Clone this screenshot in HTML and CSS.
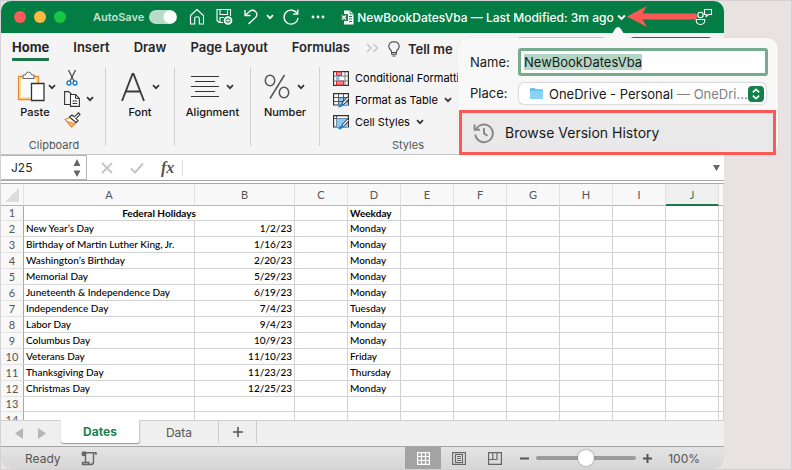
FILE: index.html
```html
<!DOCTYPE html>
<html lang="en">
<head>
    <meta charset="UTF-8">
    <meta name="viewport" content="width=device-width, initial-scale=1.0">
    <title>NewBookDatesVba</title>
    <link rel="stylesheet" href="styles.css">
</head>
<body>
    <svg class="defs" aria-hidden="true">
        <symbol id="chevron" viewBox="0 0 8 6">
            <path d="M1 1.2 L4 4.2 L7 1.2" fill="none" stroke="currentColor" stroke-width="1.7"/>
        </symbol>
    </svg>
    <div class="window">
        <div class="titlebar">
            <div class="lights">
                <span class="light red"></span>
                <span class="light yellow"></span>
                <span class="light green"></span>
            </div>
            <label class="autosave">AutoSave <input type="checkbox" class="switch" checked></label>
            <div class="quick">
                <button aria-label="Home page"><svg width="16" height="18" viewBox="0 0 16 18"><path d="M1.5 7.5 L8 1.5 L14.5 7.5 V16 H10.3 V10.5 Q10.3 8.8 8 8.8 Q5.7 8.8 5.7 10.5 V16 H1.5 Z"/></svg></button>
                <button aria-label="Save"><svg width="17" height="18" viewBox="0 0 17 18"><path d="M7 14.5 H3 L1 12.5 V1.5 H14.5 V8 M4 1.5 V6.5 H11.5 V1.5 M4 14.5 V9.5 H8"/><circle cx="12" cy="12.5" r="3.8" fill="#d5eadf"/><path d="M9.7 12.2 Q12 9.5 14.2 12 M14.3 13 Q12 15.5 9.8 13" stroke="#047d45"/></svg></button>
                <button aria-label="Undo"><svg width="14" height="18" viewBox="0 0 14 18"><path d="M1 2 V7.5 H6.5 M1.3 7.2 L5.5 3.5 Q8.5 1 11.5 3.5 Q14.3 6.5 11.5 9.5 L4.5 16" stroke-width="1.3"/></svg></button>
                <svg class="mini" width="8" height="6"><use href="#chevron"/></svg>
                <button aria-label="Redo"><svg width="18" height="18" viewBox="0 0 18 18"><path d="M15.8 1.5 V6.2 H11 M15.3 6 A7 7 0 1 0 16 10" stroke-width="1.3"/></svg></button>
                <button aria-label="More"><svg width="14" height="4" viewBox="0 0 14 4"><g fill="#fff" stroke="none"><circle cx="2" cy="2" r="1.4"/><circle cx="7" cy="2" r="1.4"/><circle cx="12" cy="2" r="1.4"/></g></svg></button>
            </div>
            <button class="doc-title">
                <svg width="14" height="15" viewBox="0 0 14 15"><path d="M4 .5 H10 L13.5 4 V14.5 H4 Z" fill="#fff"/><path d="M10 .5 V4 H13.5" fill="none" stroke="#047d45" stroke-width=".8"/><path d="M9 6.5 H12 M9 9 H12 M9 11.5 H12" stroke="#047d45"/><rect y="4" width="8" height="7" fill="#1d7c49"/><path d="M2 5.5 L6 9.5 M6 5.5 L2 9.5" stroke="#fff" stroke-width="1.2"/></svg>
                <span>NewBookDatesVba — Last Modified: 3m ago</span>
                <svg width="9" height="7"><use href="#chevron"/></svg>
            </button>
            <button class="people" aria-label="Presence"><svg width="18" height="18" viewBox="0 0 18 18"><circle cx="5.5" cy="7" r="2.7"/><path d="M1.2 11.5 H9.8 Q10 16.5 5.5 16.5 Q1 16.5 1.2 11.5 Z M9.5 1.5 H16.5 V6.5 H13.5 L11.2 8.5 V6.5 H9.5 Z"/></svg></button>
        </div>

        <nav class="tabs">
            <a href="#" class="active">Home</a>
            <a href="#">Insert</a>
            <a href="#">Draw</a>
            <a href="#">Page Layout</a>
            <a href="#">Formulas</a>
            <svg class="more" width="13" height="10" viewBox="0 0 13 10"><path d="M1 1 L5 5 L1 9 M7.5 1 L11.5 5 L7.5 9" fill="none" stroke="#c4c4c4" stroke-width="1.4"/></svg>
            <a href="#" class="tell">
                <svg width="12" height="16" viewBox="0 0 12 16"><path d="M3.7 11.5 Q3.7 10 2.2 8.5 Q.8 7 .8 5.3 Q1 .8 6 .7 Q11 .8 11.2 5.3 Q11.2 7 9.8 8.5 Q8.3 10 8.3 11.5 Z M3.7 11.5 V13.3 H8.3 V11.5 M4.5 15 H7.5" fill="none" stroke="#444" stroke-width="1.1"/></svg>
                Tell me
            </a>
            <span class="pill comments"></span>
            <span class="pill share"></span>
        </nav>

        <div class="ribbon">
            <div class="group clipboard">
                <div class="clip-tools">
                    <button class="big paste">
                        <span class="big-icon">
                            <svg width="28" height="31" viewBox="0 0 28 31"><path d="M1.5 5.5 H21.5 V28.5 H1.5 Z" fill="#fbe3a2" stroke="#ed8733" stroke-width="1.3"/><path d="M4 8 H19 V26 H4 Z" fill="#fafafa"/><path d="M6 7.5 V4 H8.5 Q9 1 11.5 1 Q14 1 14.5 4 H17 V7.5 Z" fill="#fff" stroke="#666"/><path d="M14.5 12.5 H27 V29.5 H14.5 Z" fill="#fff" stroke="#333" stroke-width="1.3"/></svg>
                            <svg class="mini" width="8" height="6"><use href="#chevron"/></svg>
                        </span>
                        Paste
                    </button>
                    <div class="clip-small">
                        <button aria-label="Cut"><svg width="16" height="16" viewBox="0 0 16 16"><path d="M4.5 0 L10 11 M11.5 0 L6 11" stroke="#444" stroke-width="1.2"/><circle cx="5" cy="13" r="2" fill="#fff" stroke="#1b82cb" stroke-width="1.4"/><circle cx="11" cy="13" r="2" fill="#fff" stroke="#1b82cb" stroke-width="1.4"/></svg></button>
                        <button aria-label="Copy"><svg width="16" height="16" viewBox="0 0 16 16"><path d="M6 13.5 H.6 V.6 H4.5 L7.5 3" fill="none" stroke="#333" stroke-width="1.1"/><path d="M6.5 3.5 H11.5 L15.4 7.4 V15.4 H6.5 Z" fill="#fff" stroke="#333" stroke-width="1.1"/><path d="M11.5 3.5 V7.4 H15.4 M8.5 10 H13.3 M8.5 12.5 H13.3" fill="none" stroke="#333"/></svg><svg class="mini" width="8" height="6"><use href="#chevron"/></svg></button>
                        <button aria-label="Format Painter"><svg width="17" height="16" viewBox="0 0 17 16"><path d="M1 7.5 L6 5.5 L12.5 10.5 L7.5 15 Z" fill="#fff" stroke="#ed8733" stroke-width="1.2"/><path d="M3 9.5 L11 11.5 L7.5 15 Z" fill="#f6b36a" stroke="#ed8733"/><path d="M5.5 5 L8 3 L10.3 4.8 L14.5 .8 L16 2.3 L12 6.5 L14 9 L12 10.5 Z" fill="#fff" stroke="#333" stroke-width="1.1"/></svg></button>
                    </div>
                </div>
                <span class="group-name">Clipboard</span>
            </div>
            <div class="group font">
                <button class="big">
                    <span class="big-icon">
                        <svg width="24" height="30" viewBox="0 0 24 30"><path d="M1 29 L11.5 2 H12.5 L23 29 M5 19.5 H19" fill="none" stroke="#3b3b3b" stroke-width="1.9"/></svg>
                        <svg class="mini" width="8" height="6"><use href="#chevron"/></svg>
                    </span>
                    Font
                </button>
            </div>
            <div class="group align">
                <button class="big">
                    <span class="big-icon">
                        <svg width="28" height="30" viewBox="0 0 28 30"><path d="M0 4.5 H28 M4 9.5 H24 M0 14.5 H28 M4 19.5 H24 M0 24.5 H28" stroke="#333" stroke-width="1.2"/></svg>
                        <svg class="mini" width="8" height="6"><use href="#chevron"/></svg>
                    </span>
                    Alignment
                </button>
            </div>
            <div class="group number">
                <button class="big">
                    <span class="big-icon">
                        <svg width="26" height="30" viewBox="0 0 26 30"><g fill="none" stroke="#555" stroke-width="1.5"><ellipse cx="6" cy="8.5" rx="4.7" ry="5.3"/><ellipse cx="20" cy="20.5" rx="4.7" ry="5.3"/><path d="M20.5 3 L6 26.5"/></g></svg>
                        <svg class="mini" width="8" height="6"><use href="#chevron"/></svg>
                    </span>
                    Number
                </button>
            </div>
            <div class="group styles">
                <div class="style-list">
                    <button>
                        <svg width="16" height="15" viewBox="0 0 16 15"><path d="M.6 .6 H15.4 V14.4 H.6 Z" fill="#fff" stroke="#333" stroke-width="1.2"/><path d="M1 5 H15 M1 10 H15 M4 1 V14 M12 1 V14" stroke="#777"/><path d="M3.5 1 H8.5 V4.5 H3.5 Z M3.5 10 H10.5 V14 H3.5 Z" fill="#f5868a" stroke="#d92d33"/><path d="M3.5 5 H6.5 V9.5 H3.5 Z" fill="#7abff0"/></svg>
                        Conditional Formatting
                    </button>
                    <button>
                        <svg width="16" height="15" viewBox="0 0 16 15"><path d="M.6 .6 H15.4 V12 H.6 Z" fill="#fff" stroke="#333" stroke-width="1.2"/><path d="M5.5 4.5 H15 V12 H5.5 Z" fill="#8cc8f4"/><path d="M1 4.5 H15 M1 8.5 H15 M5.5 1 V12 M10.5 1 V12" stroke="#555"/><path d="M15.5 4.5 L9.5 11" stroke="#333" stroke-width="3.2"/><path d="M15 5 L10 10.5" stroke="#fff" stroke-width="1.3"/><path d="M5 14.6 Q6.5 10.5 9.5 10.5 Q11.5 14 5 14.6" fill="#1b82cb"/></svg>
                        Format as Table
                        <svg class="mini" width="8" height="6"><use href="#chevron"/></svg>
                    </button>
                    <button>
                        <svg width="16" height="15" viewBox="0 0 16 15"><path d="M.6 .6 H15.4 V12 H.6 Z" fill="#fff" stroke="#333" stroke-width="1.2"/><path d="M1 3.5 H15 M3.5 1 V12" stroke="#555"/><path d="M3.5 3.5 H15 V12 H3.5 Z" fill="#8cc8f4"/><path d="M15.5 4.5 L9.5 11" stroke="#333" stroke-width="3.2"/><path d="M15 5 L10 10.5" stroke="#fff" stroke-width="1.3"/><path d="M5 14.6 Q6.5 10.5 9.5 10.5 Q11.5 14 5 14.6" fill="#1b82cb"/></svg>
                        Cell Styles
                        <svg class="mini" width="8" height="6"><use href="#chevron"/></svg>
                    </button>
                </div>
                <span class="group-name">Styles</span>
            </div>
        </div>

        <div class="formula-bar">
            <div class="name-box">
                <input type="text" value="J25" aria-label="Name Box">
                <svg width="8" height="20" viewBox="0 0 8 20"><path d="M4 1 L7.5 8 H.5 Z M4 19 L.5 12.5 H7.5 Z" fill="#666"/></svg>
            </div>
            <button aria-label="Cancel"><svg width="12" height="12" viewBox="0 0 12 12"><path d="M1 1 L11 11 M11 1 L1 11" stroke="#c6c6c6" stroke-width="2"/></svg></button>
            <button aria-label="Enter"><svg width="14" height="12" viewBox="0 0 14 12"><path d="M1 6.5 L5 10.5 L13 1.5" fill="none" stroke="#c6c6c6" stroke-width="2"/></svg></button>
            <button class="fx">fx</button>
            <input type="text" class="formula" aria-label="Formula">
            <svg class="expand" width="7" height="6" viewBox="0 0 7 6"><path d="M0 0 H7 L3.5 6 Z" fill="#666"/></svg>
        </div>

        <div class="sheet">
            <table>
                <colgroup>
                    <col class="c-row"><col class="c-a"><col class="c-b">
                    <col class="c-std" span="8"><col>
                </colgroup>
                <thead>
                    <tr>
                        <th class="corner"><svg width="14" height="14" viewBox="0 0 14 14"><path d="M14 0 V14 H0 Z" fill="#dcdcdc"/></svg></th>
                        <th>A</th><th>B</th><th>C</th><th>D</th><th>E</th><th>F</th><th>G</th><th>H</th><th>I</th><th class="current">J</th><th></th>
                    </tr>
                </thead>
                <tbody id="rows"></tbody>
            </table>
        </div>

        <div class="sheet-tabs">
            <div class="arrows">
                <svg width="8" height="11" viewBox="0 0 8 11"><path d="M8 0 V11 L0 5.5 Z" fill="#b5b5b5"/></svg>
                <svg width="8" height="11" viewBox="0 0 8 11"><path d="M0 0 V11 L8 5.5 Z" fill="#b5b5b5"/></svg>
            </div>
            <button class="sheet-tab active">Dates</button>
            <button class="sheet-tab">Data</button>
            <button class="add" aria-label="New sheet"><svg width="10" height="10" viewBox="0 0 10 10"><path d="M5 0 V10 M0 5 H10" stroke="#555" stroke-width="1.6"/></svg></button>
        </div>

        <div class="status">
            <span class="ready">Ready</span>
            <svg width="16" height="15" viewBox="0 0 16 15"><circle cx="3" cy="2.7" r="2.5" fill="#666"/><path d="M4 1.7 H15 V4 M12.5 2 V11 Q12.5 13.5 10 13.5 H1.5 V11.5 H8 V13 M4.5 4 V11.5" fill="none" stroke="#666" stroke-width="1.4"/></svg>
            <div class="views">
                <button class="on" aria-label="Normal"><svg width="13" height="13" viewBox="0 0 13 13"><path d="M.6 .6 H12.4 V12.4 H.6 Z M4.5 0 V13 M8.5 0 V13 M0 4.5 H13 M0 8.5 H13" fill="none" stroke="#fff" stroke-width="1.2"/></svg></button>
                <button aria-label="Page Layout view"><svg width="14" height="13" viewBox="0 0 14 13"><path d="M.6 .6 H13.4 V12.4 H.6 Z M3.5 2.5 H10.5 V10.5 H3.5 Z M5 4.5 H9 M5 6.5 H9 M5 8.5 H9" fill="none" stroke="#666" stroke-width="1.1"/></svg></button>
                <button aria-label="Page Break view"><svg width="14" height="13" viewBox="0 0 14 13"><path d="M.6 .6 H13.4 V12.4 H.6 Z M4.8 0 V7.5 M9 0 V7.5 M0 7.5 H9.5" fill="none" stroke="#666" stroke-width="1.2"/></svg></button>
            </div>
            <div class="zoom">
                <button aria-label="Zoom out"><svg width="9" height="9" viewBox="0 0 9 9"><path d="M0 4.5 H9" stroke="#555" stroke-width="2"/></svg></button>
                <input type="range" min="0" max="100" value="50" aria-label="Zoom">
                <button aria-label="Zoom in"><svg width="9" height="9" viewBox="0 0 9 9"><path d="M0 4.5 H9 M4.5 0 V9" stroke="#555" stroke-width="2"/></svg></button>
            </div>
            <span class="percent">100%</span>
        </div>
    </div>

    <div class="popover">
        <svg class="tip" width="28" height="14" viewBox="0 0 28 14"><path d="M0 14 Q5 13 8 8 L11 3 Q14 -1 17 3 L20 8 Q23 13 28 14 Z" fill="#f8f8f8"/></svg>
        <div class="field">
            <label for="docName">Name:</label>
            <input type="text" id="docName" value="NewBookDatesVba">
        </div>
        <div class="field">
            <label for="docPlace">Place:</label>
            <div class="place">
                <svg width="13" height="11" viewBox="0 0 13 11"><path d="M0 1 Q0 0 1 0 H4.5 L6 1.3 H12 Q13 1.3 13 2.3 V10 Q13 11 12 11 H1 Q0 11 0 10 Z" fill="#69bfe9"/><path d="M0 3 H13 V10 Q13 11 12 11 H1 Q0 11 0 10 Z" fill="#8ad3f6"/></svg>
                <select id="docPlace">
                    <option>OneDrive - Personal</option>
                </select>
                <span class="place-path">— OneDri...</span>
                <svg class="stepper" width="16" height="16" viewBox="0 0 16 16"><rect width="16" height="16" rx="4" fill="#14804b"/><path d="M4.8 6.3 L8 3.3 L11.2 6.3 M4.8 9.7 L8 12.7 L11.2 9.7" fill="none" stroke="#fff" stroke-width="1.6"/></svg>
            </div>
        </div>
        <button class="history">
            <svg width="22" height="22" viewBox="0 0 22 22"><path d="M3.2 7.3 A8.8 8.8 0 1 1 2.3 12.5 M1.6 2.5 V7.7 H7 M11 6 V11.5 L14.5 13.8" fill="none" stroke="#868686" stroke-width="1.9"/></svg>
            Browse Version History
        </button>
    </div>
    <svg class="arrow" width="71" height="21" viewBox="0 0 71 21"><path d="M0 10.5 L20 0 L15.5 7.5 H67 Q70 7.5 70 10.5 Q70 13.5 67 13.5 H15.5 L20 21 Z" fill="#fb5a54"/></svg>

    <script>
        const holidays = [
            ["New Year’s Day", "1/2/23", "Monday"],
            ["Birthday of Martin Luther King, Jr.", "1/16/23", "Monday"],
            ["Washington’s Birthday", "2/20/23", "Monday"],
            ["Memorial Day", "5/29/23", "Monday"],
            ["Juneteenth & Independence Day", "6/19/23", "Monday"],
            ["Independence Day", "7/4/23", "Tuesday"],
            ["Labor Day", "9/4/23", "Monday"],
            ["Columbus Day", "10/9/23", "Monday"],
            ["Veterans Day", "11/10/23", "Friday"],
            ["Thanksgiving Day", "11/23/23", "Thursday"],
            ["Christmas Day", "12/25/23", "Monday"],
            ["", "", ""],
            ["", "", ""]
        ];
        const blanks = "<td></td>".repeat(7);

        let html = `<tr><th>1</th><td class="heading" colspan="2">Federal Holidays</td><td></td><td class="bold">Weekday</td>${blanks}</tr>`;
        holidays.forEach((row, i) => {
            const name = row[0].replace("&", "&amp;");
            html += `<tr><th>${i + 2}</th><td>${name}</td><td class="date">${row[1]}</td><td></td><td>${row[2]}</td>${blanks}</tr>`;
        });
        document.getElementById("rows").innerHTML = html;

        const docName = document.getElementById("docName");
        docName.focus();
        docName.select();
    </script>
</body>
</html>
```
FILE: styles.css
```css
* {
    box-sizing: border-box;
}
body {
    position: relative;
    margin: 0;
    padding-right: 67px;
    height: 100vh;
    overflow: hidden;
    background-color: #e8e2e2;
    border: 1px solid #d3d1d3;
    font-family: Inter, "Liberation Sans", sans-serif;
    font-size: 11px;
    color: #262626;
}
button, input, select {
    font: inherit;
    color: inherit;
}
button {
    display: flex;
    align-items: center;
    padding: 0;
    border: none;
    background: none;
    white-space: nowrap;
}
svg {
    display: block;
    flex-shrink: 0;
}
.defs {
    position: absolute;
    width: 0;
    height: 0;
}
.window {
    display: flex;
    flex-direction: column;
    height: 100%;
    overflow: hidden;
    border-radius: 10px;
    background-color: #fff;
}
.mini {
    color: #333;
}

/* title bar */
.titlebar {
    display: flex;
    align-items: center;
    height: 32px;
    flex-shrink: 0;
    padding: 0 11px 0 13px;
    background-color: #047d45;
    color: #fff;
}
.lights {
    display: flex;
    gap: 8px;
    margin-right: 27px;
}
.light {
    width: 12px;
    height: 12px;
    border-radius: 50%;
}
.red { background-color: #fc5b57; }
.yellow { background-color: #fdb940; }
.green { background-color: #16c644; }
.autosave {
    display: flex;
    align-items: center;
    gap: 5px;
    margin-right: 12px;
    font-weight: 600;
    color: #c5e2d3;
}
.switch {
    appearance: none;
    margin: 0;
    width: 28px;
    height: 14px;
    border-radius: 7px;
    background: radial-gradient(circle at 21px 7px, #fff 6px, #b9dcca 7px);
}
.quick {
    display: flex;
    align-items: center;
    gap: 11px;
    margin-right: 15px;
}
.quick svg {
    fill: none;
    stroke: #fff;
    stroke-width: 1.1;
}
.quick .mini {
    margin: 0 -3px;
    color: #fff;
}
.doc-title {
    gap: 3px;
    font-size: 12px;
    font-weight: 500;
}
.people {
    margin-left: auto;
}
.people svg {
    fill: none;
    stroke: #fff;
    stroke-width: 1.1;
}

/* tabs */
.tabs {
    display: flex;
    align-items: flex-start;
    height: 34px;
    flex-shrink: 0;
    padding: 4px 12px 0 11px;
    gap: 24px;
    background-color: #f4f4f4;
}
.tabs a {
    height: 24px;
    line-height: 21px;
    color: #262626;
    font-size: 13px;
    font-weight: 600;
    text-decoration: none;
    white-space: nowrap;
}
.tabs .active {
    font-weight: 700;
    border-bottom: 3px solid #1b7649;
    border-radius: 1px;
}
.more {
    margin: 6px -15px 0 -8px;
}
.tabs .tell {
    display: flex;
    align-items: center;
    gap: 8px;
}
.pill {
    height: 20px;
    border-radius: 4px;
}
.comments {
    width: 90px;
    margin-left: auto;
    border: 1px solid #c8c8c8;
}
.share {
    width: 82px;
    background-color: #047d45;
}

/* ribbon */
.ribbon {
    display: flex;
    height: 88px;
    flex-shrink: 0;
    background-color: #f4f4f4;
    border-bottom: 1px solid #c6c6c6;
    font-weight: 500;
    color: #111;
}
.group {
    display: flex;
    flex-direction: column;
    align-items: center;
    height: 79px;
    border-right: 1px solid #d2d2d2;
}
.clipboard {
    width: 105px;
    padding-left: 2px;
}
.font { width: 69px; }
.align { width: 76px; }
.number { width: 69px; }
.styles {
    width: 176px;
    border-right: none;
}
.group-name {
    margin-top: auto;
    margin-bottom: -6px;
    line-height: 14px;
    font-weight: 400;
    color: #555;
}
.big {
    flex-direction: column;
    gap: 3px;
    padding-top: 4px;
    line-height: 14px;
}
.big-icon {
    display: flex;
    align-items: center;
    gap: 7px;
    height: 31px;
}
.paste .big-icon {
    gap: 3px;
    padding-left: 2px;
}
.clip-tools {
    display: flex;
    gap: 8px;
}
.clip-small {
    display: flex;
    flex-direction: column;
    gap: 5px;
    padding-top: 3px;
}
.clip-small button {
    gap: 6px;
}
.style-list {
    display: flex;
    flex-direction: column;
    align-self: stretch;
    padding-left: 13px;
    font-weight: 400;
    color: #000;
}
.style-list button {
    gap: 6px;
    height: 22px;
}

/* formula bar */
.formula-bar {
    display: flex;
    align-items: center;
    height: 29px;
    flex-shrink: 0;
    border-bottom: 4px double #a8a8a8;
}
.name-box {
    display: flex;
    align-items: center;
    align-self: stretch;
    width: 86px;
    margin-right: 14px;
    padding: 0 5px 0 10px;
    border: 1px solid #b5b5b5;
    border-left: none;
}
.name-box input {
    width: 100%;
    min-width: 0;
    padding: 0;
    border: none;
    font-size: 12px;
    font-weight: 400;
    outline: none;
}
.formula-bar button {
    margin-right: 17px;
}
.formula-bar .fx {
    margin-right: 8px;
    font: italic bold 16px "Liberation Serif", serif;
    color: #555;
}
.formula {
    flex: 1;
    height: 16px;
    border: none;
    border-left: 1px solid #ddd;
    outline: none;
}
.expand {
    margin-right: 4px;
}

/* grid */
.sheet {
    flex: 1;
    min-height: 0;
    overflow: hidden;
    font-family: Lato, "Liberation Sans", sans-serif;
}
table {
    width: 100%;
    table-layout: fixed;
    border-collapse: separate;
    border-spacing: 0;
}
.c-row { width: 23px; }
.c-a { width: 171px; }
.c-b { width: 100px; }
.c-std { width: 53px; }
th, td {
    height: 16px;
    padding: 0 2px;
    border-right: 1px solid #d2d2d2;
    border-bottom: 1px solid #d2d2d2;
    line-height: 15px;
    text-align: left;
    white-space: nowrap;
}
td {
    font-size: 10px;
    font-weight: 500;
    color: #000;
}
th {
    font-size: 11px;
    font-weight: 400;
    text-align: center;
    color: #555;
    background-color: #f8f8f8;
}
thead th {
    height: 22px;
    border-right-color: #e2e2e2;
    border-bottom-color: #b5b5b5;
}
tbody th {
    border-right-color: #a8a8a8;
    border-bottom-color: #e2e2e2;
}
tbody tr:first-child > *,
tbody tr:nth-child(13) > * {
    height: 15px;
    line-height: 14px;
}
.corner svg {
    margin-left: 2px;
}
thead .current {
    color: #1b8050;
    background-color: #f0f0f0;
    border-bottom: 2px solid #1b7649;
}
.heading {
    font-weight: 700;
    text-align: center;
}
.bold {
    font-weight: 700;
}
.date {
    text-align: right;
}

/* sheet tabs */
.sheet-tabs {
    display: flex;
    height: 27px;
    flex-shrink: 0;
    background-color: #efefef;
    border-top: 1px solid #cfcfcf;
    border-bottom: 1px solid #a5a5a5;
    font-size: 12px;
}
.arrows {
    display: flex;
    align-items: center;
    gap: 15px;
    width: 60px;
    padding-left: 14px;
}
.sheet-tab {
    justify-content: center;
    width: 79px;
    height: 22px;
    color: #555;
    border-right: 1px solid #ccc;
}
.sheet-tab.active {
    margin-top: -1px;
    height: 23px;
    font-weight: 700;
    color: #1b8050;
    background-color: #fff;
    border-radius: 0 0 3px 3px;
    box-shadow: 0 1px 1px #999;
}
.add {
    justify-content: center;
    width: 38px;
    height: 22px;
    border-right: 1px solid #ccc;
}

/* status bar */
.status {
    display: flex;
    align-items: center;
    height: 22px;
    flex-shrink: 0;
    padding: 0 24px;
    background: linear-gradient(#e4e4e4, #d6d6d6);
    font-size: 12px;
    color: #555;
}
.ready {
    margin-right: 20px;
}
.views {
    display: flex;
    align-self: stretch;
    margin-left: auto;
    margin-right: 7px;
}
.views button {
    justify-content: center;
    width: 36px;
}
.views .on {
    background-color: #a3a3a3;
}
.zoom {
    display: flex;
    align-items: center;
    gap: 7px;
    margin-right: 16px;
}
.zoom input {
    appearance: none;
    width: 100px;
    height: 4px;
    margin: 0;
    border-radius: 2px;
    background-color: #9b9b9b;
}
.zoom input::-webkit-slider-thumb {
    appearance: none;
    width: 16px;
    height: 16px;
    border-radius: 50%;
    background-color: #fff;
    box-shadow: 0 0 2px #777;
}

/* rename popover */
.popover {
    position: absolute;
    top: 37px;
    left: 457px;
    width: 320px;
    padding-top: 10px;
    border-radius: 10px;
    background-color: #f8f8f8;
    box-shadow: 0 0 2px rgba(0, 0, 0, 0.1);
    font-size: 13px;
    color: #1a1a1a;
}
.tip {
    position: absolute;
    top: -12px;
    left: 146px;
}
.field {
    display: flex;
    align-items: center;
    padding: 0 10px 0 12px;
}
.field label {
    width: 48px;
    flex-shrink: 0;
}
#docName {
    flex: 1;
    min-width: 0;
    height: 28px;
    padding: 0 3px;
    border: 3px solid #77ab8d;
    border-radius: 3px;
    background-color: #fff;
    outline: none;
}
#docName::selection {
    color: #1a1a1a;
    background-color: #b2d6c3;
}
.place {
    display: flex;
    align-items: center;
    flex: 1;
    min-width: 0;
    height: 21px;
    margin: 7px 2px 6px 1px;
    padding: 0 2px 0 11px;
    border-radius: 5px;
    background-color: #fff;
    box-shadow: 0 0 2px rgba(0, 0, 0, 0.4);
}
.place select {
    appearance: none;
    margin-left: 6px;
    padding: 0;
    border: none;
    background: none;
}
.place-path {
    margin-left: 3px;
    color: #808080;
    white-space: nowrap;
}
.stepper {
    margin-left: auto;
}
.history {
    width: 317px;
    height: 45px;
    margin-left: 1px;
    padding-left: 11px;
    gap: 10px;
    border: 3px solid #fb5a54;
    background-color: #e9e9e9;
    font-size: 14px;
}

/* pointer over the title */
.arrow {
    position: absolute;
    top: 5px;
    left: 626px;
}
```
